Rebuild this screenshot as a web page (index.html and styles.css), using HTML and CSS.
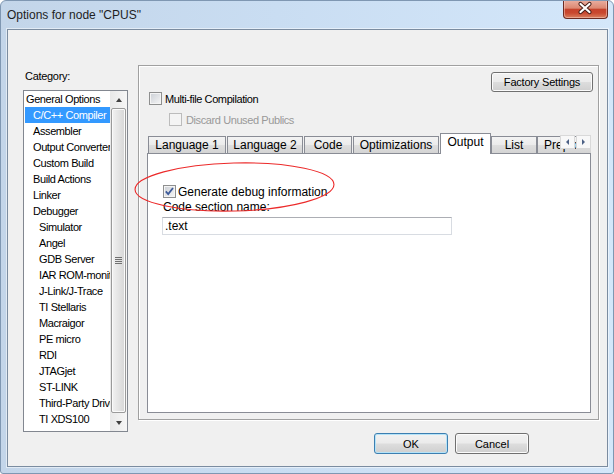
FILE: index.html
```html
<!DOCTYPE html>
<html lang="en">
<head>
  <meta charset="UTF-8">
  <title>Options for node "CPUS"</title>
  <link rel="stylesheet" href="styles.css">
</head>
<body>
  <div class="window">
    <!-- Title bar -->
    <div class="titlebar">
      <span class="title">Options for node "CPUS"</span>
      <div class="close-btn">
        <svg width="45" height="19" viewBox="0 0 45 19">
          <path d="M17.5 5 L26.5 13 M26.5 5 L17.5 13" stroke="#4a2019" stroke-width="4.2" stroke-linecap="round"/>
          <path d="M17.5 5 L26.5 13 M26.5 5 L17.5 13" stroke="#fff" stroke-width="2.2" stroke-linecap="round"/>
        </svg>
      </div>
    </div>

    <div class="client">
      <div class="main">
        <!-- Category list -->
        <div class="category">
          <div class="category-label">Category:</div>
          <div class="listbox">
            <ul class="list-items">
              <li class="lvl0">General Options</li>
              <li class="lvl1 selected">C/C++ Compiler</li>
              <li class="lvl1">Assembler</li>
              <li class="lvl1">Output Converter</li>
              <li class="lvl1">Custom Build</li>
              <li class="lvl1">Build Actions</li>
              <li class="lvl1">Linker</li>
              <li class="lvl1">Debugger</li>
              <li class="lvl2">Simulator</li>
              <li class="lvl2">Angel</li>
              <li class="lvl2">GDB Server</li>
              <li class="lvl2">IAR ROM-monitor</li>
              <li class="lvl2">J-Link/J-Trace</li>
              <li class="lvl2">TI Stellaris</li>
              <li class="lvl2">Macraigor</li>
              <li class="lvl2">PE micro</li>
              <li class="lvl2">RDI</li>
              <li class="lvl2">JTAGjet</li>
              <li class="lvl2">ST-LINK</li>
              <li class="lvl2">Third-Party Driver</li>
              <li class="lvl2">TI XDS100</li>
            </ul>
            <div class="vscroll">
              <div class="scroll-arrow up"></div>
              <div class="scroll-track">
                <div class="scroll-thumb"><span class="grip"></span></div>
              </div>
              <div class="scroll-arrow down"></div>
            </div>
          </div>
        </div>

        <!-- Options panel -->
        <div class="panel">
          <button class="btn btn-factory">Factory Settings</button>
          <div class="check-row check-multi">
            <span class="checkbox"></span>
            <span>Multi-file Compilation</span>
          </div>
          <div class="check-row check-discard">
            <span class="checkbox disabled"></span>
            <span>Discard Unused Publics</span>
          </div>

          <div class="tabs">
            <div class="tab-strip">
              <div class="tab tab-lang1">Language 1</div>
              <div class="tab tab-lang2">Language 2</div>
              <div class="tab tab-code">Code</div>
              <div class="tab tab-opt">Optimizations</div>
              <div class="tab tab-output active">Output</div>
              <div class="tab tab-list">List</div>
              <div class="tab tab-pre">Preprocessor</div>
            </div>
            <div class="tab-scroll">
              <div class="tab-arrow left"></div>
              <div class="tab-arrow right"></div>
            </div>
            <div class="tab-pane">
              <div class="check-row check-debug">
                <span class="checkbox checked">
                  <svg width="11" height="11" viewBox="0 0 11 11">
                    <path d="M1.8 5.4 L4.2 8 L9 2" fill="none" stroke="#3d5a99" stroke-width="1.8"/>
                  </svg>
                </span>
                <span>Generate debug information</span>
              </div>
              <div class="field-label">Code section name:</div>
              <div class="textbox">.text</div>
            </div>
          </div>
        </div>
      </div>

      <!-- Dialog buttons -->
      <div class="actions">
        <button class="btn btn-default">OK</button>
        <button class="btn">Cancel</button>
      </div>

      <!-- Red annotation ring -->
      <svg class="annotation" width="210" height="60" viewBox="0 0 210 60">
        <ellipse cx="101.5" cy="29" rx="99.5" ry="24" fill="none" stroke="#ec2a2a" stroke-width="1.1" transform="rotate(-1.5 101.5 29)"/>
      </svg>
    </div>
  </div>
</body>
</html>
```

FILE: styles.css
```css
/* Global */
body {
  margin: 0;
  font-family: 'Liberation Sans', Arial, sans-serif;
  font-size: 11px;
  color: #000;
}

/* Window frame */
.window {
  box-sizing: border-box;
  width: 614px;
  height: 474px;
  display: flex;
  flex-direction: column;
  border: 1px solid #7f97b2;
  border-radius: 6px 6px 3px 3px;
  background: linear-gradient(to right, #c3d5e9 0%, #c9ddf2 45%, #d4e7fa 100%);
  overflow: hidden;
}

.titlebar {
  height: 28px;
  flex: none;
  display: flex;
  align-items: center;
  padding-left: 6px;
}

.title {
  font-size: 12px;
  color: #1e1e1e;
}

.close-btn {
  align-self: flex-start;
  margin: -1px 5px 0 auto;
  width: 45px;
  height: 19px;
  box-sizing: border-box;
  border: 1px solid #6b2b22;
  border-top: none;
  border-radius: 0 0 4px 4px;
  background: linear-gradient(#eab0a2 0%, #dc8872 45%, #c5432c 52%, #c9482f 72%, #d9805f 100%);
  box-shadow: inset 0 0 0 1px rgba(255, 220, 210, 0.45);
}

.close-btn svg {
  display: block;
  margin: -1px 0 0 -1px;
}

/* Client area */
.client {
  flex: 1;
  margin: 0 5px 6px 6px;
  border: 1px solid #7b8ca0;
  background: #f0f0f0;
  position: relative;
  display: flex;
  flex-direction: column;
  box-shadow: 0 0 0 1px rgba(255, 255, 255, 0.5);
}

.main {
  display: flex;
  align-items: flex-start;
  margin-top: 35px;
  padding-left: 15px;
}

/* Category list */
.category {
  width: 105px;
  padding-top: 4px;
}

.category-label {
  line-height: 14px;
  letter-spacing: -0.3px;
  padding-left: 2px;
}

.listbox {
  margin-top: 7px;
  height: 342px;
  box-sizing: border-box;
  border: 1px solid #828790;
  background: #fff;
  display: flex;
}

.list-items {
  list-style: none;
  margin: 0;
  padding: 0;
  flex: 1;
  overflow: hidden;
}

.list-items li {
  height: 16px;
  line-height: 16px;
  white-space: nowrap;
  overflow: hidden;
  letter-spacing: -0.4px;
}

.list-items .lvl0 { padding-left: 2px; }
.list-items .lvl1 { padding-left: 9px; }
.list-items .lvl2 { padding-left: 15px; }

.list-items .selected {
  margin-left: 1px;
  padding-left: 8px;
  background: #3399ff;
  color: #fff;
}

.vscroll {
  width: 17px;
  flex: none;
  display: flex;
  flex-direction: column;
  background: linear-gradient(to right, #e8e8e8, #f6f6f6);
}

.scroll-arrow {
  height: 17px;
  flex: none;
  display: flex;
  align-items: center;
  justify-content: center;
}

.scroll-arrow::before {
  content: "";
  border-left: 3px solid transparent;
  border-right: 3px solid transparent;
}

.scroll-arrow.up::before { border-bottom: 4px solid #404040; }
.scroll-arrow.down::before { border-top: 4px solid #404040; }

.scroll-track {
  flex: 1;
  display: flex;
  padding: 0 1px 1px 1px;
}

.scroll-thumb {
  flex: 1;
  border: 1px solid #9a9a9a;
  border-radius: 2px;
  background: linear-gradient(to right, #f2f2f2, #e4e4e4 50%, #d6d6d6);
  box-shadow: inset 0 0 0 1px #fafafa;
  display: flex;
  align-items: center;
  justify-content: center;
}

.grip {
  width: 7px;
  height: 7px;
  background: repeating-linear-gradient(#707070 0 1px, transparent 1px 2px);
}

/* Options panel */
.panel {
  margin-left: 10px;
  width: 461px;
  height: 355px;
  box-sizing: border-box;
  border: 1px solid #a0a0a0;
  box-shadow: inset 1px 1px 0 #fff, 1px 1px 0 #fff;
  display: flex;
  flex-direction: column;
  padding: 6px 5px 6px 8px;
}

.btn {
  box-sizing: border-box;
  height: 21px;
  width: 74px;
  padding: 0;
  border: 1px solid #707070;
  border-radius: 3px;
  background: linear-gradient(#f2f2f2 0%, #ebebeb 48%, #dddddd 52%, #cfcfcf 100%);
  box-shadow: inset 0 0 0 1px #fbfbfb;
  font-family: inherit;
  font-size: 11px;
  color: #000;
}

.btn-default {
  border-color: #3c7fb1;
  box-shadow: inset 0 0 0 1px #b5e3f8;
}

.btn-factory {
  align-self: flex-end;
  width: 102px;
  height: 20px;
  letter-spacing: -0.2px;
}

.check-row {
  display: flex;
  align-items: center;
  height: 13px;
  gap: 3px;
  white-space: nowrap;
  letter-spacing: -0.4px;
}

.checkbox {
  width: 13px;
  height: 13px;
  box-sizing: border-box;
  flex: none;
  border: 1px solid #8e8f8f;
  background: linear-gradient(135deg, #cbcfd5, #f6f6f6);
  box-shadow: inset 0 0 0 1px #f4f4f4;
}

.checkbox.disabled {
  border-color: #bcbcbc;
  background: #f4f4f4;
}

.checkbox svg {
  display: block;
}

.check-multi {
  margin-left: 2px;
}

.check-discard {
  margin-top: 8px;
  margin-left: 22px;
  gap: 4px;
  color: #999;
}

/* Tabs */
.tabs {
  flex: 1;
  margin-top: 7px;
  margin-right: 2px;
  display: flex;
  flex-direction: column;
  position: relative;
}

.tab-strip {
  display: flex;
  align-items: flex-end;
  height: 21px;
  margin-bottom: -1px;
  padding-left: 1px;
  overflow: hidden;
  position: relative;
  z-index: 1;
}

.tab {
  box-sizing: border-box;
  flex: none;
  height: 17px;
  margin: 0 1px 1px 0;
  border: 1px solid #898c95;
  border-bottom: none;
  background: linear-gradient(#f3f3f3 0%, #ebebeb 50%, #dedede 52%, #d4d4d4 100%);
  font-size: 12px;
  line-height: 16px;
  text-align: center;
  white-space: nowrap;
  overflow: hidden;
}

.tab.active {
  height: 21px;
  margin-bottom: 0;
  margin-right: 0;
  background: #fff;
  line-height: 17px;
}

.tab-lang1 { width: 78px; }
.tab-lang2 { width: 76px; }
.tab-code { width: 48px; }
.tab-opt { width: 86px; }
.tab-output { width: 51px; }
.tab-list { width: 46px; margin-right: 0; }
.tab-pre { width: 80px; text-align: left; padding-left: 6px; }

.tab-scroll {
  position: absolute;
  top: 2px;
  right: 0;
  display: flex;
  gap: 1px;
  z-index: 2;
}

.tab-arrow {
  width: 15px;
  height: 14px;
  box-sizing: border-box;
  border: 1px solid #d9d9d9;
  background: #f8f8f8;
  display: flex;
  align-items: center;
  justify-content: center;
}

.tab-arrow::before {
  content: "";
  border-top: 3px solid transparent;
  border-bottom: 3px solid transparent;
}

.tab-arrow.left::before { border-right: 3px solid #4d6185; }
.tab-arrow.right::before { border-left: 3px solid #4d6185; }

.tab-pane {
  flex: 1;
  border: 1px solid #898c95;
  background: #fff;
  padding: 31px 0 0 15px;
  font-size: 12px;
}

.check-debug {
  gap: 2px;
  letter-spacing: 0;
}

.field-label {
  margin-top: 2px;
  line-height: 15px;
}

.textbox {
  margin: 2px 0 0 -1px;
  width: 290px;
  height: 18px;
  box-sizing: border-box;
  border: 1px solid #d8dce2;
  border-top-color: #acaeb4;
  padding-left: 2px;
  line-height: 16px;
}

/* Dialog buttons */
.actions {
  display: flex;
  justify-content: flex-end;
  gap: 7px;
  margin-top: 1px;
  padding-right: 78px;
}

/* Red annotation ring drawn over the dialog */
.annotation {
  position: absolute;
  left: 125px;
  top: 128px;
  pointer-events: none;
}
```
